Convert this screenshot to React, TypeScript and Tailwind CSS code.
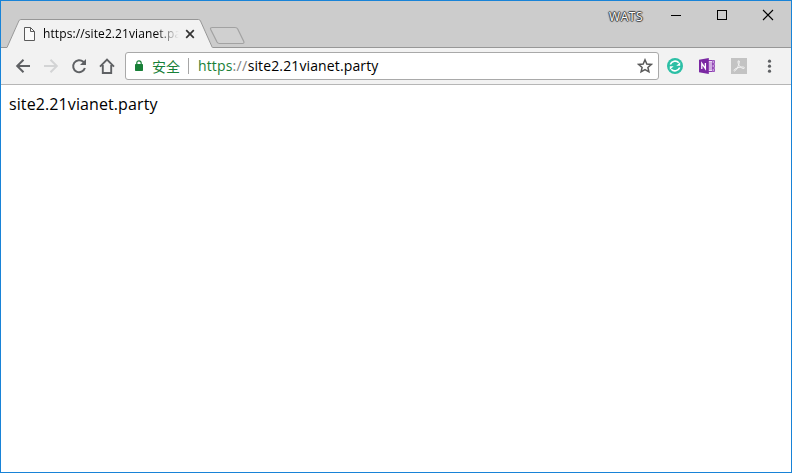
import type { ReactNode } from "react";

const ui = "font-['Open_Sans','Noto_Sans','Noto_Sans_CJK_SC',sans-serif]";

function Icon({ children, className = "" }: { children: ReactNode; className?: string }) {
  return (
    <svg viewBox="0 0 16 16" className={`block h-4 w-4 shrink-0 ${className}`} fill="none">
      {children}
    </svg>
  );
}

function Tab() {
  return (
    <div className="relative flex h-[29px] w-[206px] shrink-0 items-center pl-[15px]">
      <svg viewBox="0 0 206 29" className="absolute inset-0 h-[29px] w-[206px]" fill="none">
        <path d="M0 28.5 L11.5 2 Q12.2 .5 13.5 .5 H191.5 Q192.8 .5 193.5 2 L205.5 28.5 V29 H0Z" fill="#f2f2f2" />
        <path d="M0 28.5 L11.8 2 Q12.4 .5 13.8 .5 H191.5 Q192.8 .5 193.5 2 L205.3 28.5" stroke="#979797" />
      </svg>
      <Icon className="relative">
        <path d="M2.5 1.5h6l4 4v9h-10z" stroke="#5a5a5a" fill="#fafafa" />
        <path d="M8.5 1.5v4h4" stroke="#5a5a5a" />
      </Icon>
      <div className="relative ml-[5px] w-[136px] overflow-hidden whitespace-nowrap text-[12px] leading-[18px] tracking-[0.1px] text-black [mask-image:linear-gradient(to_right,black_112px,transparent_136px)]">
        https://site2.21vianet.party
      </div>
      <svg viewBox="0 0 10 10" className="relative ml-[6px] h-[10px] w-[10px]" fill="none">
        <path d="M1.2 1.2l7.6 7.6M8.8 1.2L1.2 8.8" stroke="#333" strokeWidth="1.7" />
      </svg>
    </div>
  );
}

function TitleBar() {
  return (
    <div className="flex h-[47px] items-start border-b border-[#979797] bg-[#ccc]">
      <div className="flex h-[47px] shrink-0 items-end pl-[6px]">
        <Tab />
        <svg viewBox="0 0 38 20" className="-ml-[5px] mb-[2px] h-[20px] w-[38px]" fill="none">
          <path d="M4.5 1.5H27Q29 1.5 29.7 3L35.8 15.5Q36.4 17.5 34.5 17.5H11.5Q9.8 17.5 9 16L2.6 3.2Q2 1.5 4.5 1.5Z" stroke="#a2a2a2" strokeWidth="1.2" fill="#d0d0d0" />
        </svg>
      </div>
      <div className="ml-auto flex items-start">
        <div className="mr-[27px] mt-[8px] w-[35px] whitespace-nowrap text-[12px] leading-[16px] tracking-[0.6px] text-white [text-shadow:0_0_1px_#333,1px_0_1px_#444,-1px_0_1px_#444,0_1px_1px_#444,0_-1px_1px_#444]">WATS</div>
        <svg viewBox="0 0 120 30" className="h-[30px] w-[120px]" fill="none" stroke="black">
          <path d="M0 14.5h10M46.5 9.5h9v9h-9z" shapeRendering="crispEdges" />
          <path d="M92 9l10 10M102 9L92 19" strokeWidth="1.1" />
        </svg>
      </div>
    </div>
  );
}

function AddressBar() {
  return (
    <div className="ml-[10px] flex h-[28px] w-[534px] shrink-0 items-center rounded-[3px] border border-[#a9a9a9] bg-white">
      <svg viewBox="0 0 10 12" className="ml-[8px] h-[12px] w-[10px]" fill="none">
        <rect x="1" y="4" width="8" height="7" rx=".7" fill="#188038" />
        <path d="M2.8 4.5V3Q2.8 .8 5 .8T7.2 3v1.5" stroke="#188038" strokeWidth="1.2" />
      </svg>
      <span className="ml-[8px] w-[28px] font-['Noto_Sans_CJK_SC',sans-serif] text-[14px] leading-[20px] text-[#188038]">安全</span>
      <span className="ml-[8px] h-[16px] w-px bg-[#a6a6a6]" />
      <span className="ml-[9px] whitespace-nowrap text-[14px] leading-[20px] tracking-[0.13px] text-black">
        <span className="text-[#188038]">https</span>
        <span className="tracking-[0.4px] text-[#808080]">://</span>site2.21vianet.party
      </span>
      <Icon className="ml-auto mr-[5px]">
        <path d="M8 1.8L9.8 6l4.5.4-3.4 3 1 4.4L8 11.5l-3.9 2.3 1-4.4-3.4-3L6.2 6z" stroke="#5a5a5a" strokeWidth="1.5" />
      </Icon>
    </div>
  );
}

function Toolbar() {
  return (
    <div className="flex h-[37px] items-center border-b border-[#b6b6b6] bg-[#f2f2f2] pl-[14px]">
      <div className="flex gap-[12px]">
        <Icon>
          <path d="M15 8H2.5M8.5 1.7L2.2 8l6.3 6.3" stroke="#5f6164" strokeWidth="2" />
        </Icon>
        <Icon>
          <path d="M1 8h12.5M7.5 1.7L13.8 8l-6.3 6.3" stroke="#d3d4d5" strokeWidth="2" />
        </Icon>
        <Icon>
          <path d="M13.9 10A6 6 0 1 1 12.3 3.8L13.5 5" stroke="#5f6164" strokeWidth="2" />
          <path d="M15 1v6H9z" fill="#5f6164" />
        </Icon>
        <Icon>
          <path d="M1 8.7L8 1.7l7 7M3.8 7v8h8.4V7" stroke="#5f6164" strokeWidth="1.9" />
        </Icon>
      </div>
      <AddressBar />
      <div className="ml-[8px] flex gap-[16px]">
        <Icon>
          <circle cx="8" cy="8" r="8" fill="#2bbfa5" />
          <path d="M3.3 6.5A5 5 0 0 1 11.8 4.8M12.7 9.5A5 5 0 0 1 4.2 11.2" stroke="white" strokeWidth="1.6" />
          <path d="M13.2 4.2v3.6H9.3zM2.8 11.8V8.2h3.9z" fill="white" />
        </Icon>
        <Icon>
          <path d="M9 2.5h4.5v11H9" fill="#eddcf5" stroke="#8a3ab0" />
          <path d="M9.5 5h3.5M9.5 7h3.5M9.5 9h3.5M9.5 11h3.5" stroke="#a466c3" strokeWidth=".8" />
          <path d="M13.5 2.5h2v3h-2M13.5 6.5h2v3h-2M13.5 10.5h2v3h-2" fill="#c79bdd" stroke="#8a3ab0" strokeWidth=".8" />
          <path d="M0 1.7L9.8 0v16L0 14.3z" fill="#7b28a3" />
          <path d="M2.8 11V5.4l3.6 5.2V5" stroke="white" strokeWidth="1.3" />
        </Icon>
        <Icon>
          <rect width="16" height="16" fill="#c3c3c3" />
          <path d="M7.3 2.8Q8.7 2.3 8.3 4.5C7.5 8 5.2 12.8 3.5 13Q2 12.8 4 11.1C6.5 9.5 9.3 8.8 12.3 9Q14.1 9.4 13 10.5C11 11 7 7.5 7 4Z" stroke="#f3f3f3" />
        </Icon>
      </div>
      <Icon className="ml-[14px]">
        <g fill="#5f6164">
          <circle cx="8.5" cy="3.2" r="1.6" />
          <circle cx="8.5" cy="8.2" r="1.6" />
          <circle cx="8.5" cy="13.2" r="1.6" />
        </g>
      </Icon>
    </div>
  );
}

export default function App() {
  return (
    <div className={`flex h-[473px] w-[792px] flex-col overflow-hidden border border-[#1883d7] bg-white ${ui}`}>
      <TitleBar />
      <Toolbar />
      <main className="px-[8px] pt-[8px] text-[16px] leading-[22px] text-black">
        <span className="whitespace-nowrap tracking-[0.1px]">site2.21vianet.party</span>
      </main>
    </div>
  );
}
